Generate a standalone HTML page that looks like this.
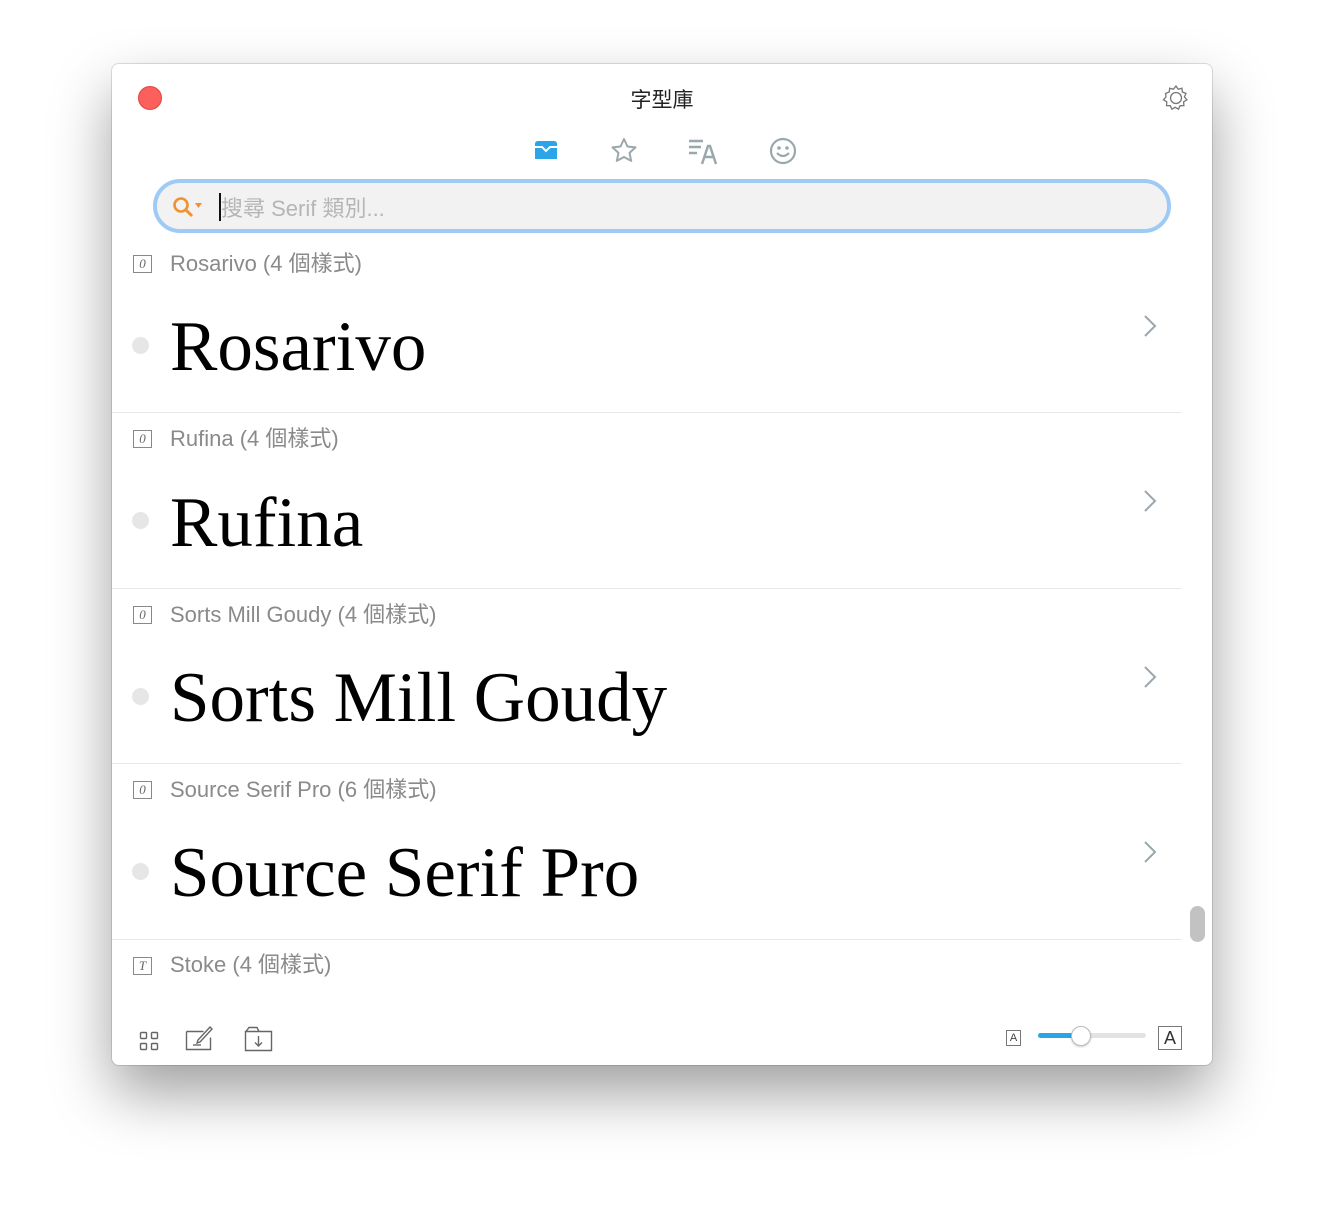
<!DOCTYPE html>
<html><head><meta charset="utf-8">
<style>
*{margin:0;padding:0;box-sizing:border-box}
body{width:1324px;height:1226px;background:#fff;position:relative;overflow:hidden;font-family:"Liberation Sans","Noto Sans CJK TC",sans-serif}
.win{position:absolute;left:112px;top:64px;width:1100px;height:1001px;background:#fff;border-radius:7px;box-shadow:0 28px 60px rgba(0,0,0,.38),0 0 0 1px rgba(0,0,0,.12);overflow:hidden}
.abs{position:absolute}
.close{left:26px;top:22px;width:24px;height:24px;border-radius:50%;background:#fc605c;border:1px solid #e0443e}
.title{left:0;width:1100px;top:20px;text-align:center;font-size:21px;color:#222}
.search{left:41px;top:115px;width:1018px;height:54px;border:4px solid #9ecbf5;border-radius:27px;background:#f2f2f2}
.ph{left:64px;top:8px;font-size:22px;color:#b5b5b5}
.caret{left:62px;top:10px;width:2px;height:28px;background:#111}
.hdr{left:58px;font-size:22px;color:#8a8a8a}
.box{left:21px;width:19px;height:18px;border:1px solid #888;font:italic 13px "Liberation Serif",serif;color:#666;text-align:center;line-height:16px}
.big{left:58px;font-family:"Liberation Serif",serif;font-size:71px;color:#000;line-height:1}
.dot{left:20px;width:17px;height:17px;border-radius:50%;background:#e6e6e6}
.sep{left:0;width:1070px;height:1px;background:#e8e8e8}
.chev{left:1030px}
</style></head><body>
<div class="win">
<div class="abs close"></div>
<div class="abs title">字型庫</div>
<svg class="abs" style="left:1050px;top:20px" width="28" height="28" viewBox="0 0 28 28"><path d="M14 2l2.2 3.2 3.7-1 .5 3.8 3.6 1.4-1.6 3.5 2.5 2.9-3.3 2 .3 3.8-3.8.1-1.6 3.5-3.3-1.9-3.3 1.9-1.6-3.5-3.8-.1.3-3.8-3.3-2 2.5-2.9L3.6 9.4 7.2 8l.5-3.8 3.7 1z" fill="none" stroke="#777" stroke-width="1.3"/><circle cx="14" cy="14" r="5.5" fill="none" stroke="#777" stroke-width="1.3"/></svg>
<svg class="abs" style="left:420px;top:74px" width="28" height="24" viewBox="0 0 28 24"><path d="M3 6q0-3 3-3h16q3 0 3 3v15H3z" fill="#2aa6e8"/><path d="M3 9h7l4 4 4-4h7" fill="none" stroke="#fff" stroke-width="2"/></svg>
<svg class="abs" style="left:497px;top:72px" width="30" height="30" viewBox="0 0 30 30"><path d="M15 3l3.5 7.5 8 .9-6 5.5 1.7 8L15 21l-7.2 3.9 1.7-8-6-5.5 8-.9z" fill="none" stroke="#9aa8ad" stroke-width="2" stroke-linejoin="round"/></svg>
<svg class="abs" style="left:576px;top:74px" width="32" height="28" viewBox="0 0 32 28"><path d="M1 3h14M1 9h12M1 15h8" stroke="#9aa8ad" stroke-width="2.5"/><path d="M14 26l6-18h2l6 18M16.5 19h9" fill="none" stroke="#9aa8ad" stroke-width="2.5"/></svg>
<svg class="abs" style="left:656px;top:72px" width="30" height="30" viewBox="0 0 30 30"><circle cx="15" cy="15" r="12" fill="none" stroke="#9aa8ad" stroke-width="2.2"/><circle cx="11" cy="12" r="1.8" fill="#9aa8ad"/><circle cx="19" cy="12" r="1.8" fill="#9aa8ad"/><path d="M9 17q6 6 12 0" fill="none" stroke="#9aa8ad" stroke-width="2.2"/></svg>
<div class="abs search">
<svg class="abs" style="left:14px;top:12px" width="34" height="26" viewBox="0 0 34 26"><circle cx="10" cy="10" r="6.5" fill="none" stroke="#f0922e" stroke-width="2.6"/><path d="M15 15l6 6" stroke="#f0922e" stroke-width="3"/><path d="M24 8h7l-3.5 5z" fill="#f0922e"/></svg>
<div class="abs caret"></div>
<div class="abs ph">搜尋 Serif 類別...</div>
</div>

<div class="abs box" style="top:191px">0</div><div class="abs hdr" style="top:182px">Rosarivo (4 個樣式)</div>
<div class="abs dot" style="top:273px"></div><div class="abs big" style="top:248px">Rosarivo</div>
<svg class="abs chev" style="top:250px" width="16" height="24"><path d="M3 2l10 10-10 10" fill="none" stroke="#9aa8ad" stroke-width="2"/></svg>
<div class="abs sep" style="top:348px"></div>

<div class="abs box" style="top:366px">0</div><div class="abs hdr" style="top:357px">Rufina (4 個樣式)</div>
<div class="abs dot" style="top:448px"></div><div class="abs big" style="top:424px">Rufina</div>
<svg class="abs chev" style="top:425px" width="16" height="24"><path d="M3 2l10 10-10 10" fill="none" stroke="#9aa8ad" stroke-width="2"/></svg>
<div class="abs sep" style="top:524px"></div>

<div class="abs box" style="top:542px">0</div><div class="abs hdr" style="top:533px">Sorts Mill Goudy (4 個樣式)</div>
<div class="abs dot" style="top:624px"></div><div class="abs big" style="top:599px">Sorts Mill Goudy</div>
<svg class="abs chev" style="top:601px" width="16" height="24"><path d="M3 2l10 10-10 10" fill="none" stroke="#9aa8ad" stroke-width="2"/></svg>
<div class="abs sep" style="top:699px"></div>

<div class="abs box" style="top:717px">0</div><div class="abs hdr" style="top:708px">Source Serif Pro (6 個樣式)</div>
<div class="abs dot" style="top:799px"></div><div class="abs big" style="top:774px">Source Serif Pro</div>
<svg class="abs chev" style="top:776px" width="16" height="24"><path d="M3 2l10 10-10 10" fill="none" stroke="#9aa8ad" stroke-width="2"/></svg>
<div class="abs sep" style="top:875px"></div>

<div class="abs box" style="top:893px">T</div><div class="abs hdr" style="top:883px">Stoke (4 個樣式)</div>

<div class="abs" style="left:1078px;top:842px;width:15px;height:36px;border-radius:8px;background:#c2c2c2"></div>

<svg class="abs" style="left:27px;top:967px" width="22" height="22"><g fill="none" stroke="#666" stroke-width="1.4"><rect x="1.5" y="1.5" width="6" height="6" rx="1"/><rect x="12.5" y="1.5" width="6" height="6" rx="1"/><rect x="1.5" y="12.5" width="6" height="6" rx="1"/><rect x="12.5" y="12.5" width="6" height="6" rx="1"/></g></svg>
<svg class="abs" style="left:73px;top:962px" width="30" height="26"><g fill="none" stroke="#666" stroke-width="1.4"><path d="M1.5 5.5h17M1.5 5.5v18h24v-12"/><path d="M12 17l3-1 12-13-2-2-12 13z"/><path d="M8 19h8"/></g></svg>
<svg class="abs" style="left:132px;top:962px" width="30" height="26"><g fill="none" stroke="#666" stroke-width="1.4"><path d="M1.5 5.5h26v19h-26z"/><path d="M2 5.5l3-4h8l2 4"/><path d="M14.5 10v10M11 16.5l3.5 3.5 3.5-3.5"/></g></svg>
<div class="abs" style="left:894px;top:966px;width:15px;height:16px;border:1px solid #777;font-size:11px;line-height:14px;text-align:center;color:#444">A</div>
<div class="abs" style="left:926px;top:969px;width:108px;height:5px;border-radius:3px;background:#e3e3e3"></div>
<div class="abs" style="left:926px;top:969px;width:42px;height:5px;border-radius:3px;background:#2aa6e8"></div>
<div class="abs" style="left:959px;top:962px;width:20px;height:20px;border-radius:50%;background:#fff;border:1px solid #bbb;box-shadow:0 1px 2px rgba(0,0,0,.2)"></div>
<div class="abs" style="left:1046px;top:962px;width:24px;height:24px;border:1px solid #777;font-size:18px;line-height:22px;text-align:center;color:#333">A</div>
</div>
</body></html>
